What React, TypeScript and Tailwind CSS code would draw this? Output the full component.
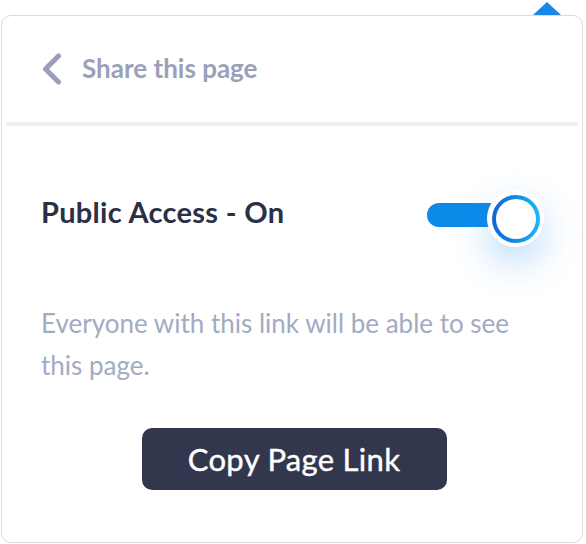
import React from "react";

export default function App() {
  return (
    <div className="relative w-[586px] h-[544px] bg-white overflow-hidden" style={{ fontFamily: "Lato, 'Noto Sans', sans-serif" }}>
      {/* pointer triangle */}
      <div className="absolute left-[533px] top-[2px] w-0 h-0 border-l-[14px] border-r-[14px] border-b-[13px] border-l-transparent border-r-transparent border-b-[#1788e5]" />
      <div className="ml-[1px] mt-[15px] w-[582px] h-[528px] border border-[#dadbe2] rounded-[10px] bg-white flex flex-col">
        <div className="h-[106px] flex items-center pl-[39px]">
          <svg width="21" height="32" viewBox="0 0 21 32" className="shrink-0">
            <path d="M17.5 3 L4.5 16 L17.5 29" fill="none" stroke="#9b9dbd" strokeWidth="5" strokeLinecap="round" strokeLinejoin="round" />
          </svg>
          <span className="ml-[20px] text-[26px] font-bold text-[#9aa1b8] leading-[1.2]">Share this page</span>
        </div>
        <div className="mx-[4px] h-[4px] bg-[#efeff4]" />
        <div className="pl-[39px] pr-[41px] flex flex-col">
          <div className="mt-[64px] flex items-start justify-between">
            <span className="mt-[5px] text-[29px] font-bold tracking-[0.3px] text-[#2b3046] leading-[1.2]">Public Access - On</span>
            <div className="relative w-[117px] h-[57px] -mr-[3px]">
              <div className="absolute left-0 top-[13px] w-[90px] h-[24px] rounded-full bg-[#0b8ae8]" />
              <div className="absolute right-0 top-0 w-[57px] h-[57px] rounded-full bg-white shadow-[0_16px_36px_rgba(40,140,240,0.3)] flex items-center justify-center">
                <div className="w-[48px] h-[48px] rounded-full bg-gradient-to-r from-[#1461d6] to-[#20b8f4] flex items-center justify-center">
                  <div className="w-[40px] h-[40px] rounded-full bg-white" />
                </div>
              </div>
            </div>
          </div>
          <p className="mt-[55px] text-[26px] leading-[42px] text-[#a2abc2]">
            Everyone with this link will be able to see this page.
          </p>
          <div className="mt-[42px] ml-[6px] flex justify-center">
            <button className="w-[305px] h-[62px] rounded-[10px] bg-[#33374e] text-white text-[31px] tracking-[0.3px] leading-none [-webkit-text-stroke:0.4px_white]">
              Copy Page Link
            </button>
          </div>
        </div>
      </div>
    </div>
  );
}
